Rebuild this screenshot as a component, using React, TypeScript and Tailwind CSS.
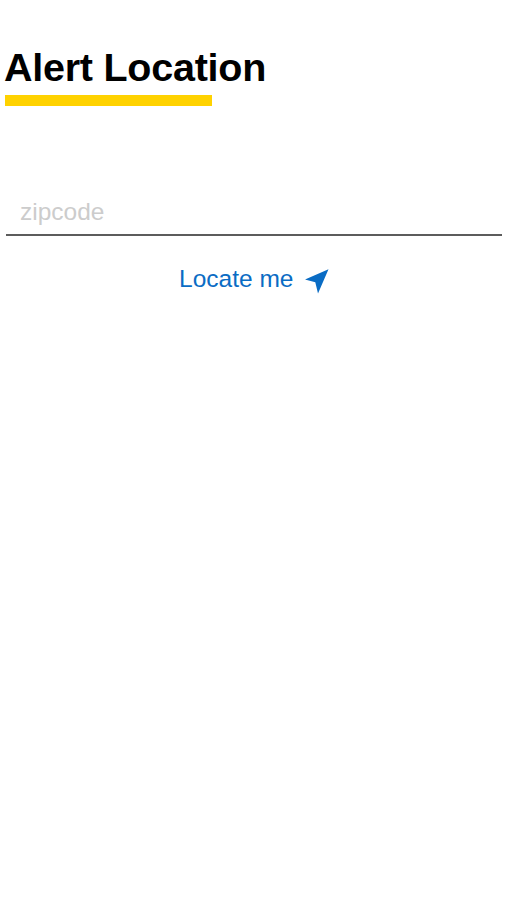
import { useState } from 'react';

const App = () => {
  const [zipcode, setZipcode] = useState('');

  return (
    <main className="h-screen overflow-hidden bg-white px-[5px] pt-[45px] font-['Liberation_Sans',Arial,sans-serif]">
      <h1 className="-ml-px text-[39.5px] leading-[44px] font-bold tracking-[-0.25px] whitespace-nowrap text-black">Alert Location</h1>
      <div className="mt-[6px] h-[11px] w-[207px] bg-[#ffd200]" />
      <form onSubmit={(e) => e.preventDefault()}>
        <div className="mt-[87px] ml-px w-[496px] border-b-2 border-[#5c5c5c]">
          <input type="text" name="zipcode" placeholder="zipcode" value={zipcode}
            onChange={(e) => setZipcode(e.target.value)}
            className="block h-[41px] w-full px-[14px] pb-[4px] text-[24.5px] text-black outline-none placeholder:text-[#cccccc]" />
        </div>
        <button type="button" className="mx-auto mt-[27px] flex items-center gap-[11.5px] pl-px text-[24.5px] leading-[32px] text-[#0a6cc4]">
          <span className="whitespace-nowrap">Locate me</span>
          <svg className="mt-1 h-[25px] w-6" viewBox="0 0 24 25" fill="currentColor">
            <path d="M23.5 .3 0 10.6 10.3 13.3 13 24.6Z" />
          </svg>
        </button>
      </form>
    </main>
  );
};

export default App;
